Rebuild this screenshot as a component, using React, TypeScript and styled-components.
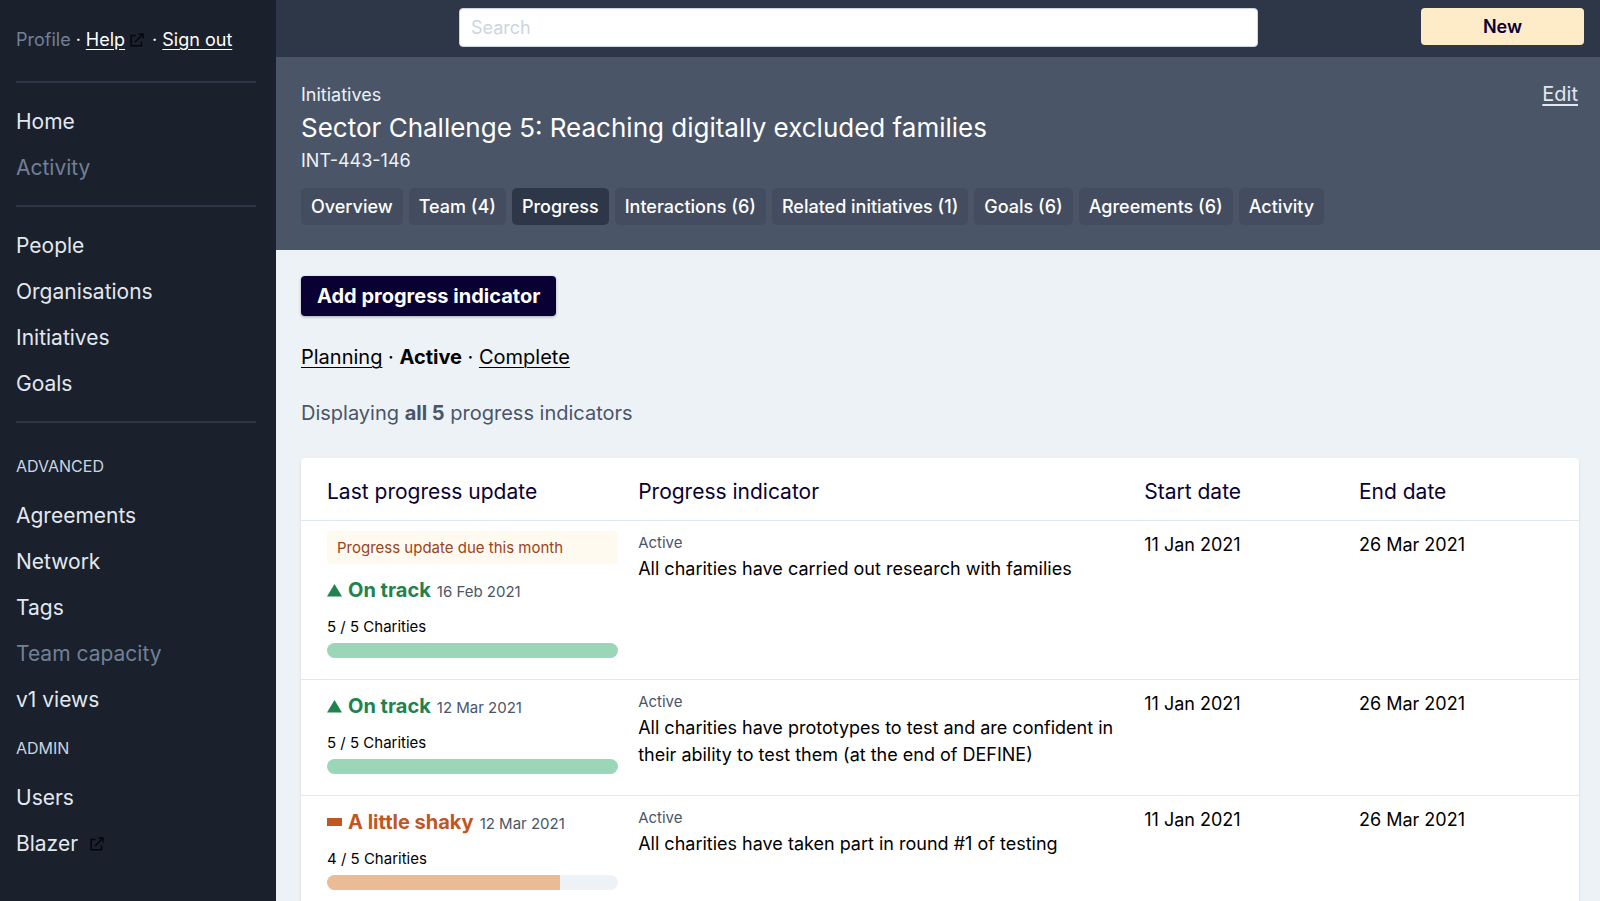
import React from "react";
import styled, { createGlobalStyle, css } from "styled-components";

const color = {
  ink: "#090033",
  gray200: "#edf2f7",
  gray300: "#e2e8f0",
  gray400: "#cbd5e0",
  gray600: "#718096",
  gray700: "#4a5568",
  gray800: "#2d3748",
  gray900: "#1a202c",
  cream: "#feebc8",
};

const GlobalStyle = createGlobalStyle`
  *, *::before, *::after { box-sizing: border-box; }
  body {
    margin: 0;
    background: ${color.gray200};
    color: #000;
    font-family: Inter, "Liberation Sans", sans-serif;
    font-size: 20px;
    line-height: 30px;
  }
  h1, p, ul, hr { margin: 0; padding: 0; }
  ul { list-style: none; }
  strong { font-weight: 700; }
  button, input { font: inherit; }
`;

const Shell = styled.div`
  display: flex;
  align-items: stretch;
  height: 100vh;
  overflow: hidden;
`;

const Sidebar = styled.nav`
  flex: none;
  width: 276px;
  padding: 25px 20px 16px 16px;
  background: ${color.gray900};
  color: ${color.gray300};
`;

const Account = styled.div`
  display: flex;
  align-items: center;
  gap: 5px;
  margin-bottom: 26px;
  font-size: 18px;
  color: #fff;
  svg { margin-right: 3px; }
`;

const AccountLink = styled.a<{ $muted?: boolean }>`
  color: ${(p) => (p.$muted ? color.gray600 : "#fff")};
  text-decoration: ${(p) => (p.$muted ? "none" : "underline")};
  text-underline-offset: 3px;
`;

const Rule = styled.hr`
  height: 2px;
  border: 0;
  background: ${color.gray800};
`;

const NavList = styled.ul<{ $ruled?: boolean }>`
  ${(p) =>
    p.$ruled &&
    css`
      padding: 16px 0 14px;
    `}
`;

const NavItem = styled.a<{ $muted?: boolean }>`
  display: flex;
  align-items: center;
  gap: 12px;
  height: 46px;
  font-size: 21px;
  color: ${(p) => (p.$muted ? color.gray600 : color.gray300)};
  text-decoration: none;
`;

const NavHeading = styled.h2<{ $first?: boolean }>`
  margin: ${(p) => (p.$first ? "28px 0 12px" : "10px 0 12px")};
  font-size: 16px;
  font-weight: 400;
  line-height: 30px;
  text-transform: uppercase;
  color: ${color.gray400};
`;

const Main = styled.main`
  flex: 1;
  min-width: 0;
`;

const TopBar = styled.div`
  display: flex;
  align-items: flex-start;
  justify-content: space-between;
  height: 57px;
  padding: 8px 16px 0 183px;
  background: ${color.gray800};
`;

const Search = styled.input`
  width: 71%;
  height: 39px;
  padding: 0 11px;
  border: 1px solid ${color.gray400};
  border-radius: 4px;
  background: #fff;
  font-size: 18px;
  &::placeholder { color: ${color.gray400}; opacity: 1; }
`;

const NewButton = styled.button`
  width: 163px;
  height: 37px;
  border: 0;
  border-radius: 4px;
  background: ${color.cream};
  color: ${color.ink};
  font-size: 18px;
  font-weight: 600;
`;

const Header = styled.header`
  padding: 24px 22px 25px 25px;
  background: ${color.gray700};
  color: ${color.gray200};
`;

const HeaderTop = styled.div`
  display: flex;
  justify-content: space-between;
  margin-bottom: 13px;
`;

const HeaderMeta = styled.p`
  font-size: 18px;
  line-height: 28px;
`;

const Title = styled.h1`
  font-size: 26px;
  font-weight: 400;
  line-height: 38px;
  color: #fff;
`;

const EditLink = styled.a`
  color: ${color.gray300};
  line-height: 26px;
  text-underline-offset: 3px;
`;

const Tabs = styled.nav`
  display: flex;
  gap: 6px;
`;

const Tab = styled.a<{ $active?: boolean }>`
  padding: 0 10px;
  border-radius: 5px;
  background: ${(p) => (p.$active ? color.gray800 : "#434d5f")};
  color: #fff;
  font-size: 18px;
  font-weight: 500;
  line-height: 37px;
  text-decoration: none;
  white-space: nowrap;
`;

const Content = styled.section`
  padding: 26px 21px 0 25px;
`;

const AddButton = styled.button`
  display: block;
  height: 40px;
  padding: 0 16px;
  border: 0;
  border-radius: 4px;
  background: ${color.ink};
  color: #fff;
  font-weight: 700;
  box-shadow: 0 1px 3px rgba(0, 0, 0, 0.3);
`;

const Filters = styled.p`
  margin-top: 26px;
  a { color: #000; text-underline-offset: 3px; text-decoration-thickness: 1px; }
`;

const Summary = styled.p`
  margin: 26px 0 30px;
  color: ${color.gray700};
`;

const Card = styled.div`
  border-radius: 4px;
  background: #fff;
  box-shadow: 0 1px 3px rgba(0, 0, 0, 0.1);
`;

const Table = styled.table`
  width: 100%;
  border-collapse: collapse;
  table-layout: fixed;
`;

const HeadCell = styled.th<{ $width: string }>`
  width: ${(p) => p.$width};
  height: 62px;
  padding: 6px 10px 0;
  border-bottom: 1px solid ${color.gray300};
  color: ${color.ink};
  font-size: 21px;
  font-weight: 400;
  text-align: left;
  &:first-child { padding-left: 26px; }
`;

const Cell = styled.td`
  padding: 10px 10px 21px;
  border-bottom: 1px solid ${color.gray300};
  font-size: 18px;
  line-height: 27px;
  vertical-align: top;
  &:first-child { padding-left: 26px; }
`;

const Notice = styled.div`
  margin-bottom: 10px;
  padding: 0 10px;
  border-radius: 4px;
  background: #fffaf0;
  color: #9c4221;
  font-size: 15px;
  line-height: 33px;
`;

const Status = styled.div<{ $tone: Tone }>`
  display: flex;
  align-items: baseline;
  gap: 6px;
  height: 32px;
  font-size: 20px;
  line-height: 32px;
  color: ${(p) => tones[p.$tone].text};
`;

const StatusDate = styled.span`
  font-size: 15px;
  color: ${color.gray700};
`;

const Count = styled.div`
  margin-top: 8px;
  font-size: 15px;
  line-height: 26px;
`;

const Track = styled.div`
  height: 15px;
  margin-top: 3px;
  border-radius: 8px;
  background: ${color.gray200};
  overflow: hidden;
`;

const Fill = styled.div<{ $tone: Tone }>`
  height: 100%;
  background: ${(p) => tones[p.$tone].bar};
`;

const Phase = styled.div`
  font-size: 15px;
  line-height: 24px;
  color: ${color.gray700};
`;

type Tone = "good" | "shaky";
const tones = {
  good: { text: "#22824f", bar: "#9ad6b7" },
  shaky: { text: "#c05621", bar: "#ebbb95" },
};

const ExternalIcon = () => (
  <svg width="14" height="14" viewBox="0 0 14 14" fill="none" stroke="#05070a" strokeWidth="1.5" aria-hidden="true">
    <path d="M5.5 2.5H1.2v10.3h10.3V8.5M5 9l7.8-7.8M8.5 1h4.5v4.5" />
  </svg>
);

const ToneIcon = ({ tone }: { tone: Tone }) =>
  tone === "good" ? (
    <svg width="15" height="13" viewBox="0 0 15 13" fill="currentColor" aria-hidden="true">
      <path d="M7.5 0L15 12.5H0z" />
    </svg>
  ) : (
    <svg width="15" height="13" viewBox="0 0 15 13" fill="currentColor" aria-hidden="true">
      <path d="M0 2h15v8H0z" />
    </svg>
  );

type NavEntry = { label: string; muted?: boolean; external?: boolean };

const Nav = ({ items, ruled }: { items: NavEntry[]; ruled?: boolean }) => (
  <NavList $ruled={ruled}>
    {items.map((item) => (
      <li key={item.label}>
        <NavItem href="#" $muted={item.muted}>
          {item.label}
          {item.external && <ExternalIcon />}
        </NavItem>
      </li>
    ))}
  </NavList>
);

const tabs = [
  "Overview",
  "Team (4)",
  "Progress",
  "Interactions (6)",
  "Related initiatives (1)",
  "Goals (6)",
  "Agreements (6)",
  "Activity",
];

type Row = { notice?: string; tone: Tone; status: string; date: string; done: number; text: string };

const rows: Row[] = [
  {
    notice: "Progress update due this month",
    tone: "good",
    status: "On track",
    date: "16 Feb 2021",
    done: 5,
    text: "All charities have carried out research with families",
  },
  {
    tone: "good",
    status: "On track",
    date: "12 Mar 2021",
    done: 5,
    text: "All charities have prototypes to test and are confident in their ability to test them (at the end of DEFINE)",
  },
  {
    tone: "shaky",
    status: "A little shaky",
    date: "12 Mar 2021",
    done: 4,
    text: "All charities have taken part in round #1 of testing",
  },
];

export default function App() {
  return (
    <>
      <GlobalStyle />
      <Shell>
        <Sidebar>
          <Account>
            <AccountLink href="#" $muted>Profile</AccountLink>
            <span>·</span>
            <AccountLink href="#">Help</AccountLink>
            <ExternalIcon />
            <span>·</span>
            <AccountLink href="#">Sign out</AccountLink>
          </Account>
          <Rule />
          <Nav ruled items={[{ label: "Home" }, { label: "Activity", muted: true }]} />
          <Rule />
          <Nav
            ruled
            items={[{ label: "People" }, { label: "Organisations" }, { label: "Initiatives" }, { label: "Goals" }]}
          />
          <Rule />
          <NavHeading $first>Advanced</NavHeading>
          <Nav
            items={[
              { label: "Agreements" },
              { label: "Network" },
              { label: "Tags" },
              { label: "Team capacity", muted: true },
              { label: "v1 views" },
            ]}
          />
          <NavHeading>Admin</NavHeading>
          <Nav items={[{ label: "Users" }, { label: "Blazer", external: true }]} />
        </Sidebar>
        <Main>
          <TopBar>
            <Search type="search" placeholder="Search" aria-label="Search" />
            <NewButton type="button">New</NewButton>
          </TopBar>
          <Header>
            <HeaderTop>
              <div>
                <HeaderMeta>Initiatives</HeaderMeta>
                <Title>Sector Challenge 5: Reaching digitally excluded families</Title>
                <HeaderMeta>INT-443-146</HeaderMeta>
              </div>
              <EditLink href="#">Edit</EditLink>
            </HeaderTop>
            <Tabs>
              {tabs.map((tab) => (
                <Tab key={tab} href="#" $active={tab === "Progress"}>
                  {tab}
                </Tab>
              ))}
            </Tabs>
          </Header>
          <Content>
            <AddButton type="button">Add progress indicator</AddButton>
            <Filters>
              <a href="#">Planning</a> · <strong>Active</strong> · <a href="#">Complete</a>
            </Filters>
            <Summary>
              Displaying <strong>all 5</strong> progress indicators
            </Summary>
            <Card>
              <Table>
                <thead>
                  <tr>
                    <HeadCell $width="25.6%">Last progress update</HeadCell>
                    <HeadCell $width="39.6%">Progress indicator</HeadCell>
                    <HeadCell $width="16.8%">Start date</HeadCell>
                    <HeadCell $width="18%">End date</HeadCell>
                  </tr>
                </thead>
                <tbody>
                  {rows.map((row) => (
                    <tr key={row.text}>
                      <Cell>
                        {row.notice && <Notice>{row.notice}</Notice>}
                        <Status $tone={row.tone}>
                          <ToneIcon tone={row.tone} />
                          <strong>{row.status}</strong>
                          <StatusDate>{row.date}</StatusDate>
                        </Status>
                        <Count>{row.done} / 5 Charities</Count>
                        <Track>
                          <Fill $tone={row.tone} style={{ width: `${(row.done / 5) * 100}%` }} />
                        </Track>
                      </Cell>
                      <Cell>
                        <Phase>Active</Phase>
                        {row.text}
                      </Cell>
                      <Cell>11 Jan 2021</Cell>
                      <Cell>26 Mar 2021</Cell>
                    </tr>
                  ))}
                </tbody>
              </Table>
            </Card>
          </Content>
        </Main>
      </Shell>
    </>
  );
}
